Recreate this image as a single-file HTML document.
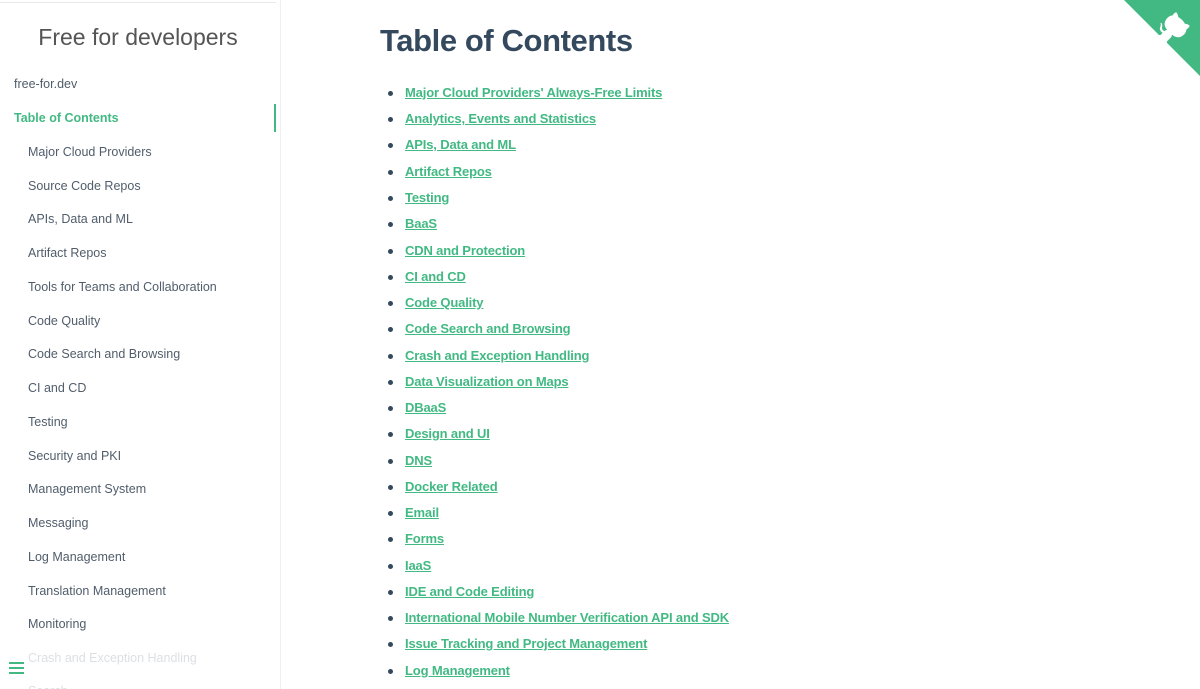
<!DOCTYPE html>
<html><head><meta charset="utf-8"><style>
*{margin:0;padding:0;box-sizing:border-box}
body{width:1200px;height:689px;overflow:hidden;background:#fff;font-family:"Liberation Sans",sans-serif;position:relative}
.side{position:absolute;left:0;top:0;width:281px;height:689px;border-right:1px solid #eee;overflow:hidden}
.topline{position:absolute;left:0;top:2px;width:276px;height:1px;background:#e8e8e8}
.side h1{position:absolute;top:24px;left:0;width:276px;text-align:center;font-weight:normal;font-size:23px;color:#555}
.side a{position:absolute;font-size:12.5px;color:#505d6b;white-space:nowrap}
.act{color:#42b983!important;font-weight:bold}
.bar{position:absolute;left:274px;top:104px;width:2px;height:28px;background:#42b983}
.main h2{position:absolute;left:380px;top:23px;font-size:31px;font-weight:bold;color:#34495e;letter-spacing:-0.4px}
.main ul{list-style:none}
.main li{position:absolute;left:388px;font-size:13px;white-space:nowrap}
.main li::before{content:"";position:absolute;left:0;top:6px;width:5px;height:5px;border-radius:50%;background:#34495e}
.main li a{margin-left:17px;color:#42b983;text-decoration:underline;font-weight:bold;letter-spacing:-0.15px}
.ham{position:absolute;left:9px;top:662px;width:15px}
.ham i{display:block;height:2px;background:#42b983;margin-bottom:3px}
</style></head><body>
<div class="side">
<div class="topline"></div>
<h1>Free for developers</h1>
<a style="left:14px;top:77px">free-for.dev</a>
<a class="act" style="left:14px;top:111px">Table of Contents</a>
<div class="bar"></div>
<a style="left:28px;top:145px">Major Cloud Providers</a>
<a style="left:28px;top:179px">Source Code Repos</a>
<a style="left:28px;top:212px">APIs, Data and ML</a>
<a style="left:28px;top:246px">Artifact Repos</a>
<a style="left:28px;top:280px">Tools for Teams and Collaboration</a>
<a style="left:28px;top:314px">Code Quality</a>
<a style="left:28px;top:347px">Code Search and Browsing</a>
<a style="left:28px;top:381px">CI and CD</a>
<a style="left:28px;top:415px">Testing</a>
<a style="left:28px;top:449px">Security and PKI</a>
<a style="left:28px;top:482px">Management System</a>
<a style="left:28px;top:516px">Messaging</a>
<a style="left:28px;top:550px">Log Management</a>
<a style="left:28px;top:584px">Translation Management</a>
<a style="left:28px;top:617px">Monitoring</a>
<a style="left:28px;top:651px;color:#dde0e3">Crash and Exception Handling</a>
<a style="left:28px;top:684px;color:#dde0e3">Search</a>
</div>
<div class="ham"><i></i><i></i><i></i></div>
<div class="main">
<h2>Table of Contents</h2>
<ul>
<li style="top:85px"><a>Major Cloud Providers' Always-Free Limits</a></li>
<li style="top:111px"><a>Analytics, Events and Statistics</a></li>
<li style="top:137px"><a>APIs, Data and ML</a></li>
<li style="top:164px"><a>Artifact Repos</a></li>
<li style="top:190px"><a>Testing</a></li>
<li style="top:216px"><a>BaaS</a></li>
<li style="top:243px"><a>CDN and Protection</a></li>
<li style="top:269px"><a>CI and CD</a></li>
<li style="top:295px"><a>Code Quality</a></li>
<li style="top:321px"><a>Code Search and Browsing</a></li>
<li style="top:348px"><a>Crash and Exception Handling</a></li>
<li style="top:374px"><a>Data Visualization on Maps</a></li>
<li style="top:400px"><a>DBaaS</a></li>
<li style="top:426px"><a>Design and UI</a></li>
<li style="top:453px"><a>DNS</a></li>
<li style="top:479px"><a>Docker Related</a></li>
<li style="top:505px"><a>Email</a></li>
<li style="top:531px"><a>Forms</a></li>
<li style="top:558px"><a>IaaS</a></li>
<li style="top:584px"><a>IDE and Code Editing</a></li>
<li style="top:610px"><a>International Mobile Number Verification API and SDK</a></li>
<li style="top:636px"><a>Issue Tracking and Project Management</a></li>
<li style="top:663px"><a>Log Management</a></li>
</ul>
</div>
<svg style="position:absolute;right:0;top:0" width="76" height="76" viewBox="0 0 250 250">
<path d="M0 0L115 115L130 115L142 142L250 250L250 0Z" fill="#42b983"/>
<path d="M128.3 109C113.8 99.7 119 89.6 119 89.6C122 82.7 120.5 78.6 120.5 78.6C119.2 72 123.4 76.3 123.4 76.3C127.3 80.9 125.5 87.3 125.5 87.3C122.9 97.6 130.6 101.9 134.4 103.2" fill="#fff"/>
<path d="M115 115C114.9 115.1 118.7 116.5 119.8 115.4L133.7 101.6C136.9 99.2 139.9 98.4 142.2 98.6C133.8 88 127.5 74.4 143.8 58C148.5 53.4 154 51.2 159.7 51C160.3 49.4 163.2 43.6 171.4 40.1C171.4 40.1 176.1 42.5 178.8 56.2C183.1 58.6 187.2 61.8 190.9 65.4C194.5 69 197.7 73.2 200.1 77.6C213.8 80.2 216.3 84.9 216.3 84.9C212.7 93.1 206.9 96 205.4 96.6C205.1 102.4 203 107.8 198.3 112.5C181.9 128.9 168.3 122.5 157.7 114.1C157.9 116.9 156.7 120.9 152.7 124.9L141 136.5C139.8 137.7 141.6 141.9 141.8 141.8Z" fill="#fff"/>
</svg>
</body></html>
